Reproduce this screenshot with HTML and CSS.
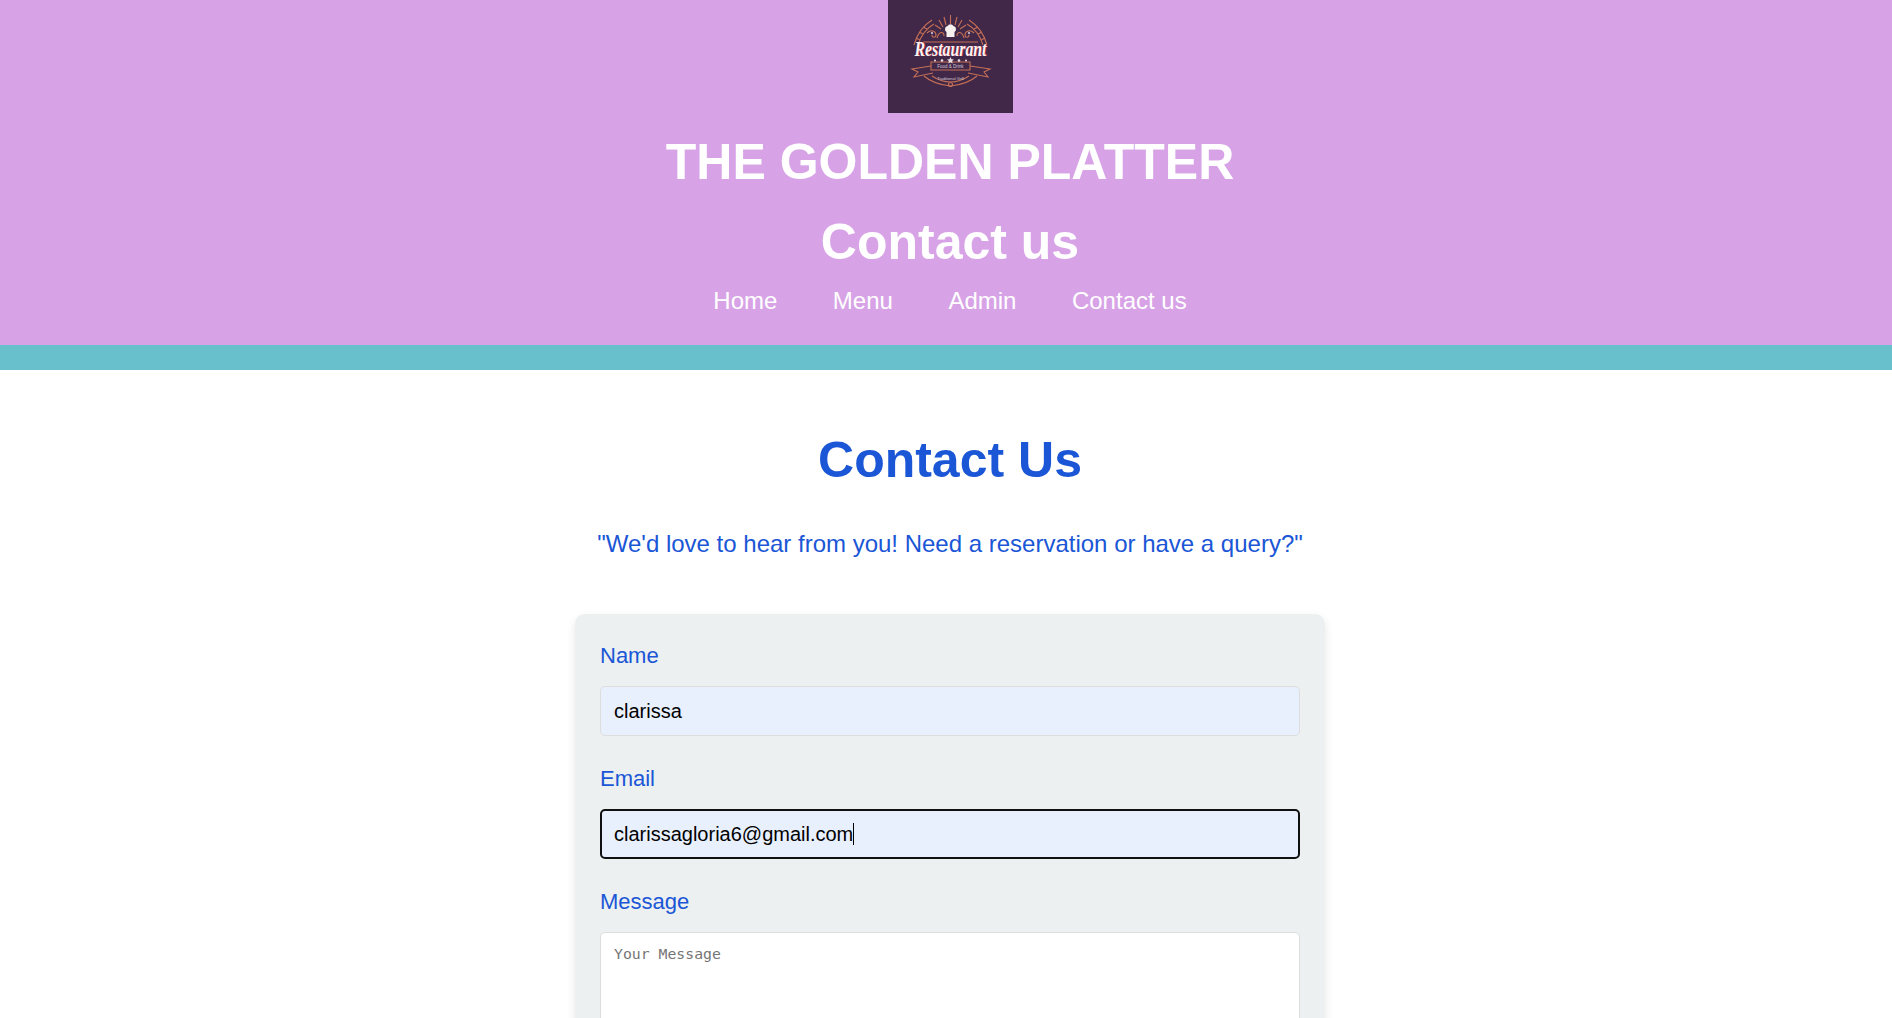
FILE: index.html
```html
<!DOCTYPE html>
<html lang="en">
<head>
    <meta charset="UTF-8">
    <meta name="viewport" content="width=device-width, initial-scale=1.0">
    <title>Contact us</title>
    <link rel="stylesheet" href="styles.css">
</head>
<body>
    <div class="page">
        <header class="site-header">
            <svg class="logo" viewBox="0 0 125 113" role="img" aria-label="Restaurant logo">
                <rect width="125" height="113" fill="#412848"/>
                <g fill="none" stroke="#c56f55" stroke-width="1.1">
                    <path d="M26 45 C29 34 36 25 44 20"/>
                    <path d="M30 45 C33 35 39 28 46 24"/>
                    <path d="M99 45 C96 34 89 25 81 20"/>
                    <path d="M95 45 C92 35 86 28 79 24"/>
                    <path d="M28 38 L32 40 M31 32 L35 34 M35 27 L39 29 M97 38 L93 40 M94 32 L90 34 M90 27 L86 29"/>
                    <path d="M62.5 15 V24 M56 17 L58 25 M69 17 L67 25 M51 20 L55 27 M74 20 L70 27 M47 25 L53 29 M78 25 L72 29"/>
                    <path d="M39 33 C43 29 48 31 48 35 C48 38 44 38 44 35 M86 33 C82 29 77 31 77 35 C77 38 81 38 81 35"/>
                    <path d="M49 38 C51 31 56 31 56 36 M76 38 C74 31 69 31 69 36"/>
                    <path d="M35 42 H90"/>
                    <path d="M43 62 H82 V70 H43 Z"/>
                    <path d="M43 66 L24 69 L30 72 L26 77 L45 73 M82 66 L102 69 L96 72 L100 77 L80 73"/>
                    <path d="M36 76 C44 83 53 85 62.5 86 C72 85 81 83 89 76"/>
                    <path d="M44 76 C50 80 56 82 62.5 82 C69 82 75 80 81 76"/>
                    <circle cx="62.5" cy="84.500" r="2"/>
                </g>
                <circle cx="44" cy="33" r="1.200" fill="#b9a9c4"/>
                <circle cx="81" cy="33" r="1.200" fill="#b9a9c4"/>
                <path d="M57 29 a3 3 0 0 1 2.500 -3 a3.500 3.500 0 0 1 6 0 a3 3 0 0 1 2.500 3 a3 3 0 0 1 -1.500 3 v5 h-8 v-5 a3 3 0 0 1 -1.500 -3 Z" fill="#f6f0ee"/>
                <g fill="#e9dfe4">
                    <circle cx="54" cy="60.500" r="1.300"/>
                    <path d="M62.500 57 l1 2.300 2.500 .2 -1.900 1.600 .6 2.400 -2.200 -1.300 -2.200 1.300 .6 -2.400 -1.900 -1.600 2.500 -.2 Z"/>
                    <circle cx="71" cy="60.500" r="1.300"/>
                    <circle cx="47" cy="60.500" r="1"/>
                    <circle cx="78" cy="60.500" r="1"/>
                </g>
                <text class="logo-script logo-script-shadow" x="63.200" y="56.200" text-anchor="middle" textLength="72" lengthAdjust="spacingAndGlyphs">Restaurant</text>
                <text class="logo-script" x="62.5" y="55.500" text-anchor="middle" textLength="72" lengthAdjust="spacingAndGlyphs">Restaurant</text>
                <text class="logo-small" x="62.5" y="68" text-anchor="middle">Food &amp; Drink</text>
                <text class="logo-tiny" x="62.5" y="80" text-anchor="middle">Traditional Grill</text>
            </svg>
            <h1>THE GOLDEN PLATTER</h1>
            <h1>Contact us</h1>
            <nav class="main-nav">
                <a href="#">Home</a>
                <a href="#">Menu</a>
                <a href="#">Admin</a>
                <a href="#">Contact us</a>
            </nav>
        </header>
        <div class="stripe"></div>

        <section class="contact">
            <h2>Contact Us</h2>
            <p class="tagline">"We'd love to hear from you! Need a reservation or have a query?"</p>
            <form class="contact-form">
                <label for="name">Name</label>
                <input id="name" class="filled" type="text" value="clarissa">
                <label for="email">Email</label>
                <div id="email" class="input-focus">clarissagloria6@gmail.com<span class="caret"></span></div>
                <label for="message">Message</label>
                <textarea id="message" rows="5" placeholder="Your Message"></textarea>
            </form>
        </section>
    </div>
</body>
</html>
```

FILE: styles.css
```css
html, body {
    margin: 0;
    height: 100%;
    overflow: hidden;
}

body {
    font-family: "Liberation Sans", Arial, sans-serif;
    background: #ffffff;
}

.page {
    width: 1900px;
}

.site-header {
    background: #d7a3e6;
    color: #ffffff;
    text-align: center;
    height: 345px;
}

.logo {
    display: block;
    width: 125px;
    height: 113px;
    margin: 0 auto;
}

.logo-script {
    font-family: "Liberation Serif", serif;
    font-style: italic;
    font-weight: bold;
    font-size: 20px;
    fill: #fbf3f3;
}

.logo-script-shadow {
    fill: #c4354a;
}

.logo-small {
    font-family: "Liberation Sans", sans-serif;
    font-size: 4.5px;
    fill: #d9ccd8;
}

.logo-tiny {
    font-family: "Liberation Sans", sans-serif;
    font-size: 4px;
    fill: #d9ccd8;
}

.site-header h1 {
    font-size: 50px;
    line-height: 60px;
    margin: 0;
    padding-top: 19px;
    padding-bottom: 1px;
}

.main-nav {
    display: flex;
    justify-content: center;
    gap: 55.5px;
    margin-top: 14px;
}

.main-nav a {
    color: #ffffff;
    font-size: 24px;
    text-decoration: none;
}

.stripe {
    background: #67c0cb;
    height: 25px;
}

.contact {
    text-align: center;
    color: #1a56d6;
}

.contact h2 {
    font-size: 50px;
    line-height: 60px;
    margin: 0;
    padding-top: 60px;
}

.tagline {
    font-size: 24px;
    line-height: 28px;
    margin: 0;
    padding-top: 40px;
}

.contact-form {
    width: 700px;
    margin: 56px auto 0;
    padding: 29px 25px 25px;
    background: #ecf0f1;
    border-radius: 10px;
    box-shadow: 0 4px 10px rgba(0, 0, 0, 0.1);
    text-align: left;
}

.contact-form label {
    display: block;
    font-size: 22px;
    line-height: 25px;
    margin-bottom: 18px;
    color: #1a56d6;
}

.contact-form input,
.contact-form textarea,
.input-focus {
    display: block;
    box-sizing: border-box;
    width: 100%;
    height: 50px;
    margin-bottom: 30px;
    padding: 12px 13px;
    font-size: 20px;
    border: 1px solid #dddddd;
    border-radius: 5px;
    outline: none;
}

.contact-form input.filled,
.input-focus {
    background: #e8f0fe;
    font-family: "Liberation Sans", Arial, sans-serif;
    color: #000000;
}

.input-focus {
    border: 2px solid #101010;
    padding: 11px 12px;
    line-height: 24px;
}

.caret {
    display: inline-block;
    width: 1px;
    height: 22px;
    background: #000000;
    vertical-align: -4px;
}

.contact-form textarea {
    height: 170px;
    font-family: "DejaVu Sans Mono", monospace;
    font-size: 14.8px;
    resize: vertical;
    background: #ffffff;
}

.contact-form textarea::placeholder {
    color: #757575;
}
```
